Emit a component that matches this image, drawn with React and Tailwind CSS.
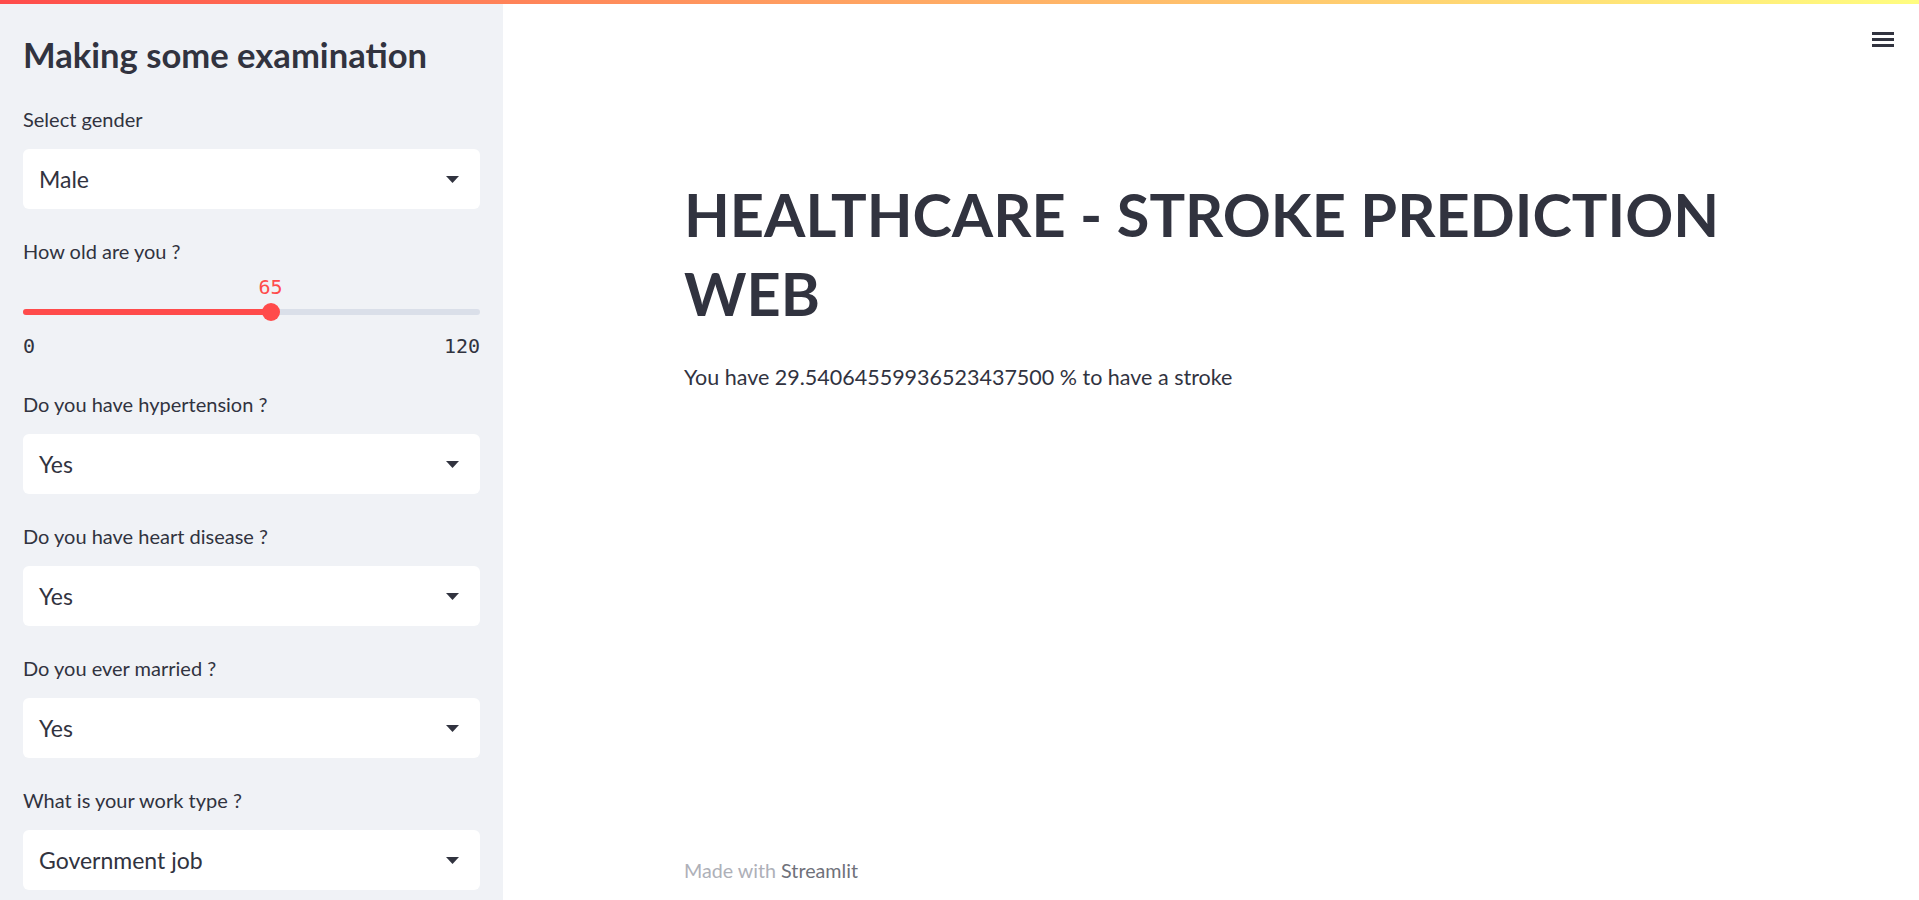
import React from "react";

const TEXT = "text-[#31333f]";

function Arrow() {
  return (
    <svg width="13" height="7" viewBox="0 0 13 7" className="shrink-0">
      <polygon points="0,0 13,0 6.5,7" fill="#31333f" />
    </svg>
  );
}

function SelectBox({ label, value }) {
  return (
    <div className="flex flex-col">
      <div className={`h-[36px] leading-[36px] text-[20px] ${TEXT} mb-[12px]`}>{label}</div>
      <div className="h-[60px] bg-white rounded-[6px] flex items-center justify-between pl-[16px] pr-[21px]">
        <span className={`text-[23px] leading-[30px] -mt-[1px] ${TEXT}`}>{value}</span>
        <Arrow />
      </div>
    </div>
  );
}

function Slider({ label, value, min, max }) {
  const pct = ((value - min) / (max - min)) * 100;
  return (
    <div className="flex flex-col">
      <div className={`h-[36px] leading-[36px] text-[20px] ${TEXT}`}>{label}</div>
      <div className="h-[93px] flex flex-col">
        <div className="relative h-[37px]">
          <span
            className="absolute top-0 leading-[37px] text-[20px] text-[#ff4b4b]"
            style={{ left: `${pct}%`, transform: "translateX(-50%)", fontFamily: '"DejaVu Sans Mono", monospace' }}
          >
            {value}
          </span>
        </div>
        <div className="relative h-[12px] flex items-center">
          <div className="h-[6px] w-full rounded-full bg-[#dadfe9]">
            <div className="h-[6px] rounded-full bg-[#ff4b4b]" style={{ width: `${pct}%` }} />
          </div>
          <div
            className="absolute top-[-3px] w-[18px] h-[18px] rounded-full bg-[#ff4b4b]"
            style={{ left: `${pct}%`, transform: "translateX(-50%)" }}
          />
        </div>
        <div
          className={`mt-[12px] h-[32px] leading-[32px] text-[20px] flex justify-between ${TEXT}`}
          style={{ fontFamily: '"DejaVu Sans Mono", monospace' }}
        >
          <span>{min}</span>
          <span>{max}</span>
        </div>
      </div>
    </div>
  );
}

export default function App() {
  return (
    <div
      className="relative w-[1919px] h-[900px] flex overflow-hidden bg-white"
      style={{ fontFamily: 'Lato, "Noto Sans", sans-serif' }}
    >
      <div className="absolute top-0 left-0 right-0 h-[4px] bg-gradient-to-r from-[#ff4b4b] to-[#fffd80] z-10" />

      <aside className="w-[503px] h-[900px] shrink-0 bg-[#f0f2f6] px-[23px] pt-[31px]">
        <h2 className={`h-[48px] leading-[48px] text-[34.6px] font-bold mb-[22px] ${TEXT}`}>
          Making some examination
        </h2>
        <div className="flex flex-col gap-[24px]">
          <SelectBox label="Select gender" value="Male" />
          <Slider label="How old are you ?" value={65} min={0} max={120} />
          <SelectBox label="Do you have hypertension ?" value="Yes" />
          <SelectBox label="Do you have heart disease ?" value="Yes" />
          <SelectBox label="Do you ever married ?" value="Yes" />
          <SelectBox label="What is your work type ?" value="Government job" />
        </div>
      </aside>

      <main className="relative flex-1 h-[900px] flex flex-col">
        <button className="absolute top-[32px] right-[25px] flex flex-col gap-[3px]" aria-label="menu">
          <span className="block w-[22px] h-[3px] bg-[#31333f]" />
          <span className="block w-[22px] h-[3px] bg-[#31333f]" />
          <span className="block w-[22px] h-[3px] bg-[#31333f]" />
        </button>

        <div className="w-[1054px] mx-auto flex flex-col flex-1 pt-[175px] pb-[14px]">
          <h1 className={`text-[59.5px] leading-[79px] font-bold ${TEXT}`}>
            HEALTHCARE - STROKE PREDICTION WEB
          </h1>
          <p className={`mt-[26px] text-[21.5px] leading-[36px] ${TEXT}`}>
            You have 29.54064559936523437500 % to have a stroke
          </p>
          <div className="mt-auto h-[30px] leading-[30px] text-[19.7px]">
            <span className="text-[#aeb0b8]">Made with </span>
            <span className="text-[#6f717a]">Streamlit</span>
          </div>
        </div>
      </main>
    </div>
  );
}
